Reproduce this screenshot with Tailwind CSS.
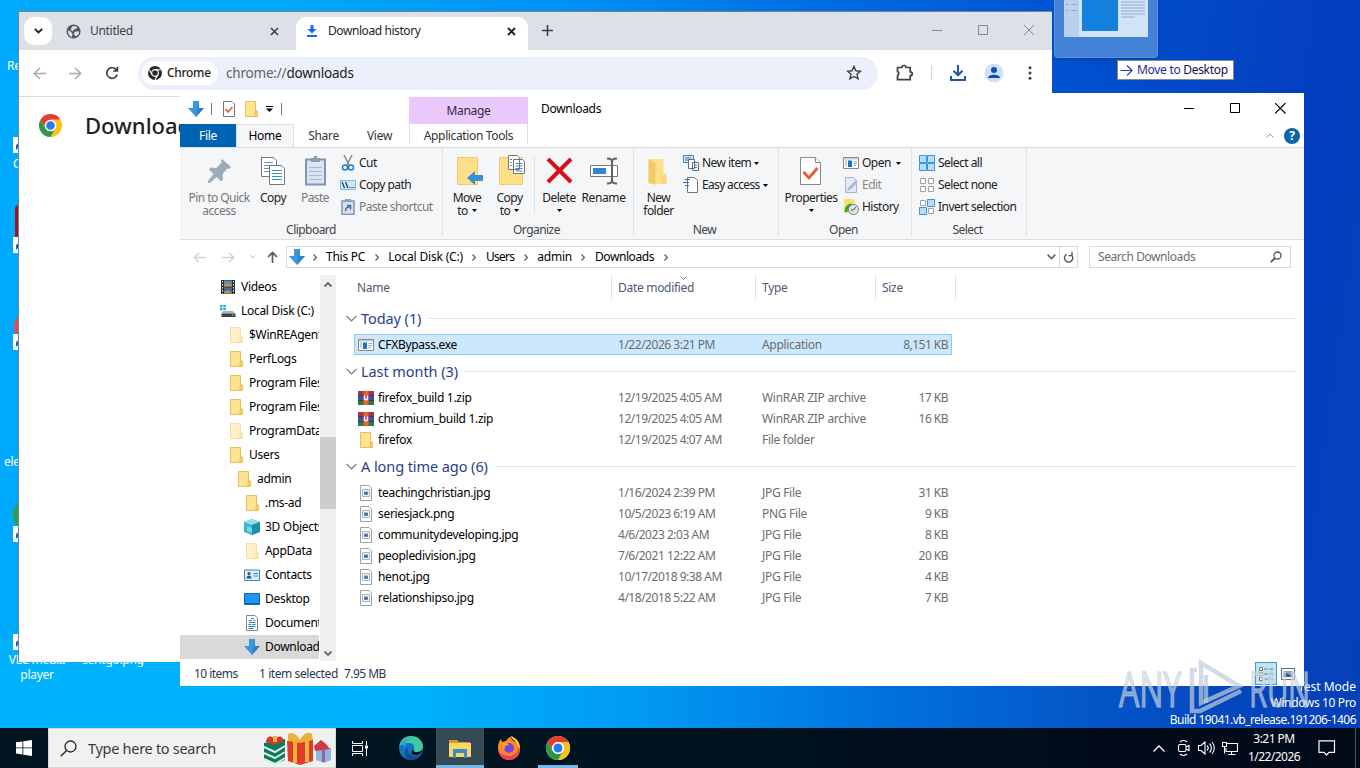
<!DOCTYPE html>
<html lang="en">
  <head>
    <meta charset="UTF-8" />
    <meta name="viewport" content="width=device-width, initial-scale=1.0" />
    <title>Desktop</title>
    <script src="https://cdn.jsdelivr.net/npm/@tailwindcss/browser@4"></script>
  </head>
  <body class="overflow-hidden">
    <!-- Shared icons -->
    <svg class="hidden">
      <symbol id="folder" viewBox="0 0 16 16">
        <path d="M2.500 .5h10v9.500h1.500v5.500h-11.500z" fill="#ffe48f" stroke="#e8c15a" />
        <path d="M12 15.500v-5l2.300-.5v5.500z" fill="#ffd968" stroke="#e0b548" stroke-width=".8" />
      </symbol>
      <symbol id="down" viewBox="0 0 16 16">
        <path d="M5 0h6v7h5l-8 9-8-9h5z" fill="#3a96dd" />
        <path d="M11 0v7h5l-8 9z" fill="#2f80c8" />
      </symbol>
      <symbol id="app" viewBox="0 0 16 16">
        <path d="M.5 2.500h15v11H.5z" fill="#fff" stroke="#8a8a8a" />
        <path d="M1 3h14v1.500H1z" fill="#c9cdd1" />
        <path d="M5 5.500h4v6.500H5z" fill="#1373cf" />
        <path d="M2 6h2M2 8h2M2 10h2M10.500 6.500H14M10.500 8.500H14M10.500 10.500H13" stroke="#8fa6bd" />
      </symbol>
      <symbol id="zip" viewBox="0 0 16 16">
        <path d="M0 1h16v4.500H0z" fill="#a3344f" />
        <path d="M0 5.500h16v5H0z" fill="#3158a8" />
        <path d="M0 10.500h16V15H0z" fill="#2c7a3f" />
        <path d="M0 5.500h16M0 10.500h16" stroke="#3b2330" stroke-width=".8" />
        <path d="M5.500 1h5v14h-5z" fill="#e8642a" />
        <path d="M5 5.500h6v4.500H5z" fill="#c9447a" />
        <path d="M6.500 5.500v4M9.500 5.500v4M6.500 9.500h3" stroke="#fff" stroke-width="1.300" fill="none" />
      </symbol>
      <symbol id="img" viewBox="0 0 16 16">
        <path d="M2.500 .5h8.500l2.500 2.500v12.500h-11z" fill="#fff" stroke="#9aa2ac" />
        <path d="M4.500 4.500h7v7h-7z" fill="#f2f6fa" stroke="#a8b4c0" />
        <path d="M6 6.500h4v3H6z" fill="#5c86b0" />
        <path d="M6 9.500l2-2 2 2z" fill="#33577c" />
      </symbol>
      <symbol id="video" viewBox="0 0 16 16">
        <path d="M1 1h14v14H1z" fill="#2e2e2e" />
        <path d="M4 1.500h8v6H4z" fill="#6287b8" />
        <path d="M4 8.500h8v6H4z" fill="#4467a3" />
        <path d="M4 6l4-2 4 3v.5H4zM4 13l4-2 4 3v.5H4z" fill="#b99b45" />
        <path d="M2.500 2v12.500M13.500 2v12.500" stroke="#e8e8e8" stroke-dasharray="1.500 1.500" />
      </symbol>
      <symbol id="disk" viewBox="0 0 16 16">
        <path d="M0 2h2.500v2.300H0zM3.300 2h2.500v2.300H3.300zM0 5h2.500v2.300H0zM3.300 5h2.500v2.300H3.300z" fill="#18b5d8" />
        <path d="M3 8h10l2 2.500H1.500z" fill="#aab1b8" />
        <path d="M1.500 10.500H15.500v3.500h-14z" fill="#3c4146" />
        <path d="M12 12h2" stroke="#4bd66b" />
      </symbol>
      <symbol id="cube" viewBox="0 0 16 16">
        <path d="M8 0l8 3v10l-8 3-8-3V3z" fill="#3bb6c9" />
        <path d="M0 3l8-3 8 3-8 3z" fill="#8fe3ea" />
        <path d="M8 6l8-3v10l-8 3z" fill="#1a90ae" />
        <path d="M3 7l5 2v5l-5-2z" fill="#74d6e0" />
      </symbol>
      <symbol id="contact" viewBox="0 0 16 16">
        <path d="M.5 3h15v10.500H.5z" fill="#d9eefa" stroke="#4a87ad" />
        <circle cx="5" cy="6.500" r="1.500" fill="#2b5878" />
        <path d="M2.500 11.500c0-4 5-4 5 0z" fill="#2b5878" />
        <path d="M9.500 6.500H14M9.500 9H14" stroke="#4a87ad" />
      </symbol>
      <symbol id="desk" viewBox="0 0 16 16">
        <path d="M.5 2.500h15v11H.5z" fill="#1898f8" stroke="#1668b0" />
        <path d="M1 12.500h14" stroke="#0e5fae" />
      </symbol>
      <symbol id="doc" viewBox="0 0 16 16">
        <path d="M2.500 .5h8.500l2.500 2.500v12.500h-11z" fill="#fff" stroke="#7d8892" />
        <path d="M7 3.500h3M4.500 5.500H8M9.500 5.500h2M4.500 7.500h7M4.500 9.500H7M8 9.500h3.500M4.500 11.500h7M4.500 13.500h5" stroke="#2f82c4" />
      </symbol>
      <symbol id="chrome" viewBox="0 0 48 48">
        <circle cx="24" cy="24" r="24" fill="#fff" />
        <path d="M3.200 12A24 24 0 0 1 44.800 12H24a12 12 0 0 0-10.400 18z" fill="#e33b2e" />
        <path d="M44.800 12A24 24 0 0 1 24 48l10.400-18A12 12 0 0 0 24 12z" fill="#fbc116" />
        <path d="M24 48A24 24 0 0 1 3.200 12l10.400 18a12 12 0 0 0 20.800 0z" fill="#2b9847" />
        <circle cx="24" cy="24" r="11.500" fill="#fff" />
        <circle cx="24" cy="24" r="9" fill="#2e79ea" />
      </symbol>
      <symbol id="shortcut" viewBox="0 0 16 16">
        <path d="M0 0h16v16H0z" fill="#fff" />
        <path d="M3 13V8l4-3V2l6 5-6 5V9z" fill="#1f5fae" />
      </symbol>
    </svg>

    <div class="relative h-[768px] w-[1360px] overflow-hidden bg-[linear-gradient(98deg,#00aaff_0%,#00a8fc_20%,#008ff2_40%,#006fe2_55%,#0052d0_73%,#043fc0_90%,#0540bc_100%)] font-['Noto_Sans','Open_Sans',sans-serif] text-[12px] leading-4 tracking-[-0.025em] text-black">
      <div class="absolute inset-x-0 top-[640px] h-[88px] bg-[linear-gradient(90deg,#00b2fc_0%,#00b2fc_30%,#009cf4_46%,#0074e0_64%,#045acb_78%,#0444bc_92%,#0440ba_100%)]"></div>

      <!-- Desktop icons that stick out from behind the windows -->
      <div class="absolute top-[58px] left-[7px] text-white">Recycle</div>
      <svg class="absolute top-[137px] left-[13px] size-4"><use href="#shortcut" /></svg>
      <div class="absolute top-[156px] left-[13px] text-white">Ccleaner</div>
      <div class="absolute top-[205px] left-[15px] h-9 w-8 rounded bg-[#a01420]"></div>
      <svg class="absolute top-[237px] left-[13px] size-4"><use href="#shortcut" /></svg>
      <div class="absolute top-[311px] left-[14px] size-8 rounded-full bg-[#e5484e]"></div>
      <svg class="absolute top-[334px] left-[13px] size-4"><use href="#shortcut" /></svg>
      <div class="absolute top-[454px] left-[4px] text-white">electronic</div>
      <div class="absolute top-[498px] left-[13px] size-[34px] rounded-full bg-[#2f9e4c]"></div>
      <svg class="absolute top-[526px] left-[13px] size-4"><use href="#shortcut" /></svg>
      <svg class="absolute top-[634px] left-[13px] size-4"><use href="#shortcut" /></svg>
      <div class="absolute top-[652px] left-[8px] w-[58px] text-center leading-[15px] text-white">VLC media player</div>
      <div class="absolute top-[652px] left-[82px] leading-[15px] text-white">seritgo.png</div>

      <!-- Dragged file -->
      <div class="absolute top-0 left-[1054px] flex h-[58px] w-[104px] justify-center rounded-b-sm border border-t-0 border-[#5b92dc] bg-[#4482d8] shadow-md">
        <svg class="h-[37px] w-[84px]" viewBox="0 0 84 37">
          <path d="M0 0h84v37H0z" fill="#d3e3f7" />
          <path d="M0 0h15v37H0z" fill="#b9d1ef" />
          <path d="M18 0h36v31H18z" fill="#1480de" />
          <path d="M2 4.500h3M7 4.500h6M2 10.500h3M7 10.500h6M57 2h24M57 5h24M57 8h24M57 11h24M57 14h24M57 17h14" stroke="#8faed2" />
        </svg>
      </div>
      <div class="absolute top-[60px] left-[1117px] flex h-5 w-[117px] items-center gap-1 border border-[#8a8a8a] bg-white pl-[2px] text-[#1a2a9c]">
        <svg class="size-[13px]" viewBox="0 0 13 13" fill="none" stroke="#2a3fc0" stroke-width="1.2"><path d="M.5 6.500h11M7 1.500l5 5-5 5" /></svg>
        <span class="whitespace-nowrap">Move to <span class="text-[#110a50]">Desktop</span></span>
      </div>

      <!-- Chrome window -->
      <div class="absolute top-[11px] left-[18px] flex h-[651px] w-[1034px] flex-col border-t border-l border-[#6e8494] bg-white text-[#3c4043]">
        <div class="flex h-[38px] shrink-0 bg-[#dde1e7] pt-[5px] pl-[5px]">
          <div class="flex size-7 items-center justify-center rounded-[10px] bg-white">
            <svg class="h-[6px] w-[9px]" viewBox="0 0 9 6" fill="none" stroke="#1f1f1f" stroke-width="1.800"><path d="M.8.8l3.700 3.700L8.200.8" /></svg>
          </div>
          <div class="flex h-7 w-[244px] items-center pl-[14px]">
            <svg class="size-[15px]" viewBox="0 0 16 16"><circle cx="8" cy="8" r="7.500" fill="#54585c" /><path d="M2 7l3 1 2 3-1 3C3 13 2 10 2 7zM7 2l5 1-1 2-3 1-1 2-2-2zM10 8l4 0c0 3-2 5-4 5l-2-3z" fill="#dde1e7" /></svg>
            <span class="ml-[9px] flex-1">Untitled</span>
            <svg class="mr-[17px] size-[9px]" viewBox="0 0 9 9" stroke="#3c4043" stroke-width="1.600"><path d="M1 1l7 7M8 1L1 8" /></svg>
          </div>
          <div class="flex h-[33px] w-[232px] items-center rounded-t-[10px] bg-white pb-[5px] pl-[11px] text-[#1f1f1f]">
            <svg class="h-3 w-[10px]" viewBox="0 0 10 12"><path d="M3.500 0h3v4H9.500L5 8.500.5 4H3.500zM0 10h10v2H0z" fill="#1a66e8" /></svg>
            <span class="ml-[11px] flex-1 tracking-[-0.035em]">Download history</span>
            <svg class="mr-[12px] size-[9px]" viewBox="0 0 9 9" stroke="#1f1f1f" stroke-width="1.800"><path d="M1 1l7 7M8 1L1 8" /></svg>
          </div>
          <svg class="mt-2 ml-[14px] size-[11px]" viewBox="0 0 11 11" stroke="#3c4043" stroke-width="1.600"><path d="M5.500 0v11M0 5.500h11" /></svg>
          <div class="mt-2 mr-[18px] ml-auto flex items-start gap-[36px]">
            <svg class="size-[10px]" viewBox="0 0 10 10" stroke="#85888c"><path d="M0 5.500h10" /></svg>
            <svg class="size-[10px]" viewBox="0 0 10 10" stroke="#85888c" fill="none"><path d="M.5.5h9v9h-9z" /></svg>
            <svg class="size-[10px]" viewBox="0 0 10 10" stroke="#85888c"><path d="M0 0l10 10M10 0L0 10" /></svg>
          </div>
        </div>
        <div class="flex h-[47px] shrink-0 items-center rounded-t-lg border-b border-[#d8dbe0] bg-white pl-[14px]">
          <svg class="size-[13px]" viewBox="0 0 13 13" fill="none" stroke="#a6a8aa" stroke-width="1.500"><path d="M13 6.500H1.500M7 1L1.300 6.500 7 12" /></svg>
          <svg class="ml-[23px] size-[13px]" viewBox="0 0 13 13" fill="none" stroke="#a6a8aa" stroke-width="1.500"><path d="M0 6.500h11.500M6 1l5.700 5.500L6 12" /></svg>
          <svg class="ml-[23px] size-[14px]" viewBox="0 0 14 14" fill="none" stroke="#3c4043" stroke-width="1.700"><path d="M11.600 4.200A5.300 5.300 0 1 0 12.200 8.500M12.400 .8v4.200H8.200" /></svg>
          <div class="ml-[19px] flex h-[33px] w-[740px] items-center rounded-full bg-[#ecf0fa] pl-1">
            <div class="flex h-6 w-[76px] items-center rounded-full bg-white pl-[6px]">
              <svg class="size-[14px]" viewBox="0 0 16 16"><circle cx="8" cy="8" r="8" fill="#28292b" /><circle cx="8" cy="8" r="3.800" fill="none" stroke="#fff" stroke-width="1.300" /><path d="M8 4.200h7M4.700 10L1.300 4M11.300 10L8 15.800" stroke="#fff" stroke-width="1.200" /></svg>
              <span class="ml-[5px] font-medium text-[#1f1f1f]">Chrome</span>
            </div>
            <span class="ml-[8px] text-[13.5px] tracking-[-0.015em] text-[#5f6368]">chrome://<span class="text-[#202124]">downloads</span></span>
            <svg class="mr-[16px] ml-auto size-4" viewBox="0 0 16 16" fill="none" stroke="#3c4043" stroke-width="1.400"><path d="M8 1.500l1.900 4.300 4.600.4-3.500 3.100 1.100 4.600L8 11.500l-4.100 2.400L5 9.300 1.500 6.200l4.600-.4z" /></svg>
          </div>
          <svg class="ml-[18px] size-[18px]" viewBox="0 0 18 18" fill="none" stroke="#3c4043" stroke-width="1.700"><path d="M1.500 3.500h4.500a2 2 0 0 1 4 0h4.200v4.300a2 2 0 0 1 0 4v3.900H1.500v-4.200a2.200 2.200 0 0 0 0-4z" /></svg>
          <div class="ml-[17px] h-[14px] w-px bg-[#c5d6f5]"></div>
          <svg class="ml-[18px] size-4" viewBox="0 0 16 16" fill="none" stroke="#2056a8" stroke-width="2"><path d="M8 0v10M3.500 5.800L8 10.300l4.500-4.500M1 11v4h14v-4" /></svg>
          <svg class="ml-[18px] size-[20px]" viewBox="0 0 20 20"><circle cx="10" cy="10" r="9.500" fill="#d0e2fb" /><circle cx="10" cy="7" r="3" fill="#124fb8" /><path d="M4 15c0-4.500 12-4.500 12 0z" fill="#124fb8" /></svg>
          <svg class="ml-[24px] h-[14px] w-1" viewBox="0 0 4 14" fill="#3c4043"><circle cx="2" cy="1.800" r="1.500" /><circle cx="2" cy="7" r="1.500" /><circle cx="2" cy="12.200" r="1.500" /></svg>
        </div>
        <div class="flex items-center pt-[12px] pl-[20px]">
          <svg class="size-[23px]"><use href="#chrome" /></svg>
          <span class="ml-[23px] text-[22px] leading-8 font-medium tracking-normal text-[#202124]">Downloads</span>
        </div>
      </div>

      <!-- Explorer window -->
      <div class="absolute top-[93px] left-[180px] flex h-[593px] w-[1124px] flex-col bg-white">
        <!-- Title bar and tabs -->
        <div class="flex h-[54px] shrink-0">
          <div class="w-[229px]">
            <div class="flex h-[31px] items-center pl-2">
              <svg class="size-4"><use href="#down" /></svg>
              <div class="ml-[7px] h-3 w-px bg-[#777]"></div>
              <svg class="ml-[9px] size-4" viewBox="0 0 16 16" fill="#fff" stroke="#777"><path d="M2.500 .5h8.500l2.500 2.500v12.500h-11z" /><path d="M4.500 8l2.500 3 4.500-5" fill="none" stroke="#e0623a" stroke-width="1.700" /></svg>
              <svg class="ml-[6px] size-4"><use href="#folder" /></svg>
              <svg class="ml-[7px] h-[6px] w-[7px]" viewBox="0 0 7 6"><path d="M0 0h7v1H0zM0 2.500h7L3.500 6z" /></svg>
              <div class="ml-[8px] h-3 w-px bg-[#777]"></div>
            </div>
            <div class="flex h-[23px] leading-[23px]">
              <div class="w-14 bg-[#0063b1] text-center text-white">File</div>
              <div class="-mb-px w-[58px] border border-b-0 border-[#e0e2e4] bg-[#f5f6f7] text-center leading-[21px]">Home</div>
              <div class="w-[59px] text-center text-[#333]">Share</div>
              <div class="w-[53px] text-center text-[#333]">View</div>
            </div>
          </div>
          <div class="w-[119px] pt-1">
            <div class="h-[27px] bg-[#e9c9fb] text-center leading-[28px] text-[#3a2545]">Manage</div>
            <div class="h-[20px] border-x border-[#e4dcea] text-center leading-[23px] tracking-[-0.03em] whitespace-nowrap text-[#333]">Application Tools</div>
          </div>
          <span class="mt-2 ml-[13px]">Downloads</span>
          <div class="ml-auto w-[120px]">
            <div class="flex h-[31px] items-center gap-[34.5px]">
              <svg class="size-[11px]" viewBox="0 0 11 11" stroke="#000"><path d="M0 5.500h10" /></svg>
              <svg class="size-[11px]" viewBox="0 0 11 11" stroke="#000" fill="none"><path d="M.5.5h9v9h-9z" /></svg>
              <svg class="size-[11px]" viewBox="0 0 11 11" stroke="#000" stroke-width="1.100"><path d="M0 0l10.500 10.500M10.500 0L0 10.500" /></svg>
            </div>
            <div class="flex h-[23px] items-center pl-[82px]">
              <svg class="h-[5px] w-2" viewBox="0 0 8 5" fill="none" stroke="#999"><path d="M.5 4.500L4 1l3.500 3.500" /></svg>
              <div class="ml-[10px] size-4 rounded-full bg-[#0b63ae] text-center text-[12px] leading-4 font-bold text-white">?</div>
            </div>
          </div>
        </div>

        <!-- Ribbon -->
        <div class="flex h-[93px] shrink-0 border-y border-[#dcdfe1] bg-[#f5f6f7] tracking-[-0.045em] text-[#222]">
          <div class="relative flex h-[88px] w-[263px] border-r border-[#e0e2e4] pt-1 pl-[6px]">
            <div class="flex w-[66px] flex-col items-center pt-[3px] text-center leading-[13px] text-[#777]">
              <svg class="mb-1 h-8 w-8" viewBox="0 0 32 32" fill="#9dabbb"><path d="M19 4l9 8-2 2-1.500-.5-5 5.500.5 5.500-2 2-4.500-4.500L7 28l-2 0 0-2 5.500-7L6 14.500 8 12.500l5.500.5 5-5.500-.500-1.500z" /></svg>
              Pin to Quick access
            </div>
            <div class="flex w-[42px] flex-col items-center pt-[3px] leading-[13px]">
              <svg class="mb-1 size-8" viewBox="0 0 32 32" fill="#fff" stroke="#777"><path d="M4.500 2.500h12l3 3v16h-15z" /><path d="M7 7.500h9M7 10.500h9M7 13.500h9M7 16.500h9" stroke="#5b9ad8" /><path d="M12.500 10.500h12l3 3v16h-15z" /><path d="M15 15.500h10M15 18.500h10M15 21.500h10M15 24.500h10" stroke="#3f88d8" /></svg>
              Copy
            </div>
            <div class="flex w-[42px] flex-col items-center pt-[3px] leading-[13px] text-[#777]">
              <svg class="mb-1 size-8" viewBox="0 0 32 32"><path d="M7 4.500h19v25H7z" fill="#dbe4f2" stroke="#8393b2" stroke-width="2" /><path d="M12 3h9v4h-9zM15 1h3v3h-3z" fill="#8e9aac" /><path d="M10 12.500h13M10 16.500h13M10 20.500h13M10 24.500h13" stroke="#aab8d2" /></svg>
              Paste
            </div>
            <div class="ml-1">
              <div class="flex h-[22px] items-center"><svg class="mr-[3px] size-4" viewBox="0 0 16 16" fill="none"><path d="M4 0l5 10M12 0L7 10" stroke="#888" stroke-width="1.500" /><circle cx="5" cy="12.500" r="2.500" stroke="#1f83d0" stroke-width="1.500" /><circle cx="11" cy="12.500" r="2.500" stroke="#1f83d0" stroke-width="1.500" /></svg>Cut</div>
              <div class="flex h-[22px] items-center"><svg class="mr-[3px] size-4" viewBox="0 0 16 16" fill="none"><path d="M.5 3.500h15v9H.5z" fill="#cfe6f8" stroke="#86b8e0" /><path d="M2 5l2.500 6M5.500 5L8 11M9.500 10.500h1M11.500 10.500h1M13.500 10.500h1" stroke="#10395c" stroke-width="1.200" /></svg>Copy path</div>
              <div class="flex h-[22px] items-center text-[#777]"><svg class="mr-[3px] size-4" viewBox="0 0 16 16" fill="none"><path d="M2 2h12v13.500H2z" fill="#d5dfef" stroke="#8494b4" stroke-width="1.500" /><path d="M5 0h6v3H5z" fill="#94a1b5" /><path d="M5.500 12c0-3 1-4 4-4M7 6.500h3.500v4" stroke="#51699c" stroke-width="1.500" /></svg>Paste shortcut</div>
            </div>
            <span class="absolute inset-x-0 bottom-[-2px] text-center text-[#444]">Clipboard</span>
          </div>
          <div class="relative flex h-[88px] w-[191px] border-r border-[#e0e2e4] pt-1 pl-[3px]">
            <div class="flex w-[42px] flex-col items-center pt-[3px] text-center leading-[13px]">
              <svg class="mb-1 size-8" viewBox="0 0 32 32"><path d="M6.500 2.500h20v27h-20z" fill="#ffe08a" stroke="#eccb72" /><path d="M16 23l8-7v4h8v6h-8v4z" fill="#3a8fd6" /></svg>
              Move<span class="flex items-center gap-1">to <svg class="h-[3px] w-[5px]" viewBox="0 0 5 3"><path d="M0 0h5L2.500 3z" /></svg></span>
            </div>
            <div class="flex w-[43px] flex-col items-center pt-[3px] text-center leading-[13px]">
              <svg class="mb-1 size-8" viewBox="0 0 32 32"><path d="M5.500 2.500h23v27h-23z" fill="#ffe08a" stroke="#eccb72" /><path d="M14.500.5h9l2 2v12h-11zM19.500 4.500h9l2 2v12h-11z" fill="#fff" stroke="#777" /><path d="M21.500 8.500h7M21.500 11h7M21.500 13.500h7M21.500 16h7M16 4.500h2M16 7.500h2M16 10.500h2" stroke="#3f88d8" /></svg>
              Copy<span class="flex items-center gap-1">to <svg class="h-[3px] w-[5px]" viewBox="0 0 5 3"><path d="M0 0h5L2.500 3z" /></svg></span>
            </div>
            <div class="mx-[3px] mt-1 h-[58px] w-px bg-[#e0e2e4]"></div>
            <div class="flex w-[42px] flex-col items-center pt-[3px] text-center leading-[13px]">
              <svg class="mb-1 size-8" viewBox="0 0 32 32" stroke="#d9101c" stroke-width="4"><path d="M5 4l23 23M28 4L5 27" /></svg>
              Delete<svg class="mt-[5px] h-[3px] w-[5px]" viewBox="0 0 5 3"><path d="M0 0h5L2.500 3z" /></svg>
            </div>
            <div class="flex w-[47px] flex-col items-center pt-[3px] text-center leading-[13px] tracking-[-0.03em]">
              <svg class="mb-1 size-8" viewBox="0 0 32 32" fill="none"><path d="M2.500 10.500h27v11h-27z" fill="#fff" stroke="#777" /><path d="M5 13h13v6H5z" fill="#2f83d8" /><path d="M19 3.500c3 0 5 1 5 3v19c0 2-2 3-5 3M29 3.500c-3 0-5 1-5 3M24 25.500c0 2 2 3 5 3" stroke="#5f6468" stroke-width="2" /></svg>
              Rename
            </div>
            <span class="absolute inset-x-0 bottom-[-2px] -ml-[3px] text-center text-[#444]">Organize</span>
          </div>
          <div class="relative flex h-[88px] w-[145px] border-r border-[#e0e2e4] pt-1 pl-1">
            <div class="flex w-[41px] flex-col items-center pt-[3px] text-center leading-[13px]">
              <svg class="mb-1 size-8" viewBox="0 0 32 32"><path d="M5.500 4h15v16l3 0v9h-18z" fill="#ffe08a" /><path d="M5.500 4l7 4v22l-7-3z" fill="#f2cc68" /><path d="M19 20l4.500-1.500V29h-4.500z" fill="#f9d77a" /></svg>
              New folder
            </div>
            <div class="ml-1 whitespace-nowrap">
              <div class="flex h-[22px] items-center"><svg class="mr-[3px] size-4" viewBox="0 0 16 16" fill="#fff" stroke="#5f6f80"><path d="M.5.5h10v7H.5z" fill="#cfe6f8" stroke="#3d87c4" /><path d="M2 3h6M2 5h6" stroke="#3d87c4" /><path d="M5.500 4.500h6v9h-6zM9.500 7.500h6v8h-6z" /><path d="M11 10h3M11 12.500h3" /></svg>New item<svg class="ml-[3px] h-[3px] w-[5px]" viewBox="0 0 5 3"><path d="M0 0h5L2.500 3z" /></svg></div>
              <div class="flex h-[22px] items-center"><svg class="mr-[3px] size-4" viewBox="0 0 16 16" fill="none"><path d="M4.500 .5h7l3 3v12h-10z" fill="#fff" stroke="#777" /><path d="M2 2.500h5M0 5.500h6M2 8.500h4" stroke="#1f6fb8" stroke-width="1.200" /></svg><span class="tracking-[-0.055em]">Easy access</span><svg class="ml-[3px] h-[3px] w-[5px]" viewBox="0 0 5 3"><path d="M0 0h5L2.500 3z" /></svg></div>
            </div>
            <span class="absolute inset-x-0 bottom-[-2px] -ml-[3px] text-center text-[#444]">New</span>
          </div>
          <div class="relative flex h-[88px] w-[133px] border-r border-[#e0e2e4] pt-1 pl-[5px]">
            <div class="flex w-[54px] flex-col items-center pt-[3px] text-center leading-[13px]">
              <svg class="mb-1 size-8" viewBox="0 0 32 32" fill="#fff" stroke="#888"><path d="M5.500 2.500h15l5 5v22h-20z" /><path d="M20.500 2.500v5h5" /><path d="M8.500 17l5.500 6 8.500-10" fill="none" stroke="#e8592b" stroke-width="2.800" /></svg>
              Properties<svg class="mt-[5px] h-[3px] w-[5px]" viewBox="0 0 5 3"><path d="M0 0h5L2.500 3z" /></svg>
            </div>
            <div class="ml-[5px]">
              <div class="flex h-[22px] items-center"><svg class="mr-[3px] size-4"><use href="#app" /></svg>Open<svg class="ml-[5px] h-[3px] w-[5px]" viewBox="0 0 5 3"><path d="M0 0h5L2.500 3z" /></svg></div>
              <div class="flex h-[22px] items-center text-[#888]"><svg class="mr-[3px] size-4" viewBox="0 0 16 16"><path d="M2.500 .5h8l3 3v12h-11z" fill="#e3ebf6" stroke="#a5b4cc" /><path d="M4 14l1-3 8-8 2 2-8 8z" fill="#a9bbd6" /></svg>Edit</div>
              <div class="flex h-[22px] items-center"><svg class="mr-[3px] size-4" viewBox="0 0 16 16"><path d="M1 0h9l2 3v11H1z" fill="#ffdc6e" /><path d="M3 13c0-5 3-7 6-7" stroke="#2fa33c" stroke-width="3" fill="none" /><circle cx="10.500" cy="10.500" r="5" fill="#dfe9e4" stroke="#6f7f78" /><path d="M10.500 11l2.500-3M10.500 11H8" stroke="#444" fill="none" /></svg>History</div>
            </div>
            <span class="absolute inset-x-0 bottom-[-2px] -ml-[3px] text-center text-[#444]">Open</span>
          </div>
          <div class="relative h-[88px] w-[115px] border-r border-[#e0e2e4] pt-1 pl-[7px] whitespace-nowrap">
            <div class="flex h-[22px] items-center"><svg class="mr-[3px] size-4" viewBox="0 0 16 16" fill="#b9defa" stroke="#3d94d8"><path d="M.5.5h7v7h-7zM8.500.5h7v7h-7zM.5 8.500h7v7h-7zM8.500 8.500h7v7h-7z" /></svg>Select all</div>
            <div class="flex h-[22px] items-center"><svg class="mr-[3px] size-4" viewBox="0 0 16 16" fill="#fff" stroke="#a0a0a0"><path d="M1.500 1.500h5v5h-5zM9.500 1.500h5v5h-5zM1.500 9.500h5v5h-5zM9.500 9.500h5v5h-5z" /></svg>Select none</div>
            <div class="flex h-[22px] items-center"><svg class="mr-[3px] size-4" viewBox="0 0 16 16" fill="#fff" stroke="#a0a0a0"><path d="M1.500 1.500h5v5h-5zM9.500 9.500h5v5h-5z" /><path d="M8.500.5h7v7h-7zM.5 8.500h7v7h-7z" fill="#b9defa" stroke="#3d94d8" /></svg>Invert selection</div>
            <span class="absolute inset-x-0 bottom-[-2px] -ml-[3px] text-center text-[#444]">Select</span>
          </div>
        </div>

        <!-- Address bar -->
        <div class="flex h-[35px] shrink-0 items-start pt-[6px]">
          <div class="flex h-[22px] w-[106px] items-center pl-[13px]">
            <svg class="h-[11px] w-[13px]" viewBox="0 0 13 11" fill="none" stroke="#d0d2d4" stroke-width="1.500"><path d="M13 5.500H1.500M6 .8L1.300 5.500 6 10.200" /></svg>
            <svg class="ml-[16px] h-[11px] w-[13px]" viewBox="0 0 13 11" fill="none" stroke="#d0d2d4" stroke-width="1.500"><path d="M0 5.500h11.500M7 .8l4.700 4.700L7 10.200" /></svg>
            <svg class="ml-[15px] h-1 w-[6px]" viewBox="0 0 6 4" fill="none" stroke="#c0c0c0"><path d="M.5.5L3 3 5.500.5" /></svg>
            <svg class="ml-[11px] h-3 w-[11px]" viewBox="0 0 11 12" fill="none" stroke="#5a5a5a" stroke-width="1.700"><path d="M5.500 12V1.500M1 6l4.500-4.500L10 6" /></svg>
          </div>
          <div id="crumbs" class="flex h-[22px] w-[774px] items-center border border-[#d9d9d9] pl-[2px]">
            <svg class="size-4"><use href="#down" /></svg>
          </div>
          <div class="flex h-[22px] w-[18px] items-center justify-center border border-l-0 border-[#d9d9d9]">
            <svg class="size-[11px]" viewBox="0 0 12 12" fill="none" stroke="#555" stroke-width="1.500"><path d="M9.500 3.500A4.500 4.500 0 1 1 4 2.500M9.800 0v4H6" /></svg>
          </div>
          <div class="ml-[11px] flex h-[22px] w-[202px] items-center justify-between border border-[#d9d9d9] pr-2 pl-2 tracking-[-0.035em] text-[#6d6d6d]">
            Search Downloads
            <svg class="size-3" viewBox="0 0 12 12" fill="none" stroke="#555" stroke-width="1.300"><circle cx="7.500" cy="4.500" r="3.500" /><path d="M5 7L.8 11.200" stroke-width="1.800" /></svg>
          </div>
        </div>

        <!-- Tree and file list -->
        <div class="flex h-[386px] shrink-0">
          <div id="tree" class="w-[139px] overflow-hidden"></div>
          <div class="ml-px flex w-4 flex-col items-center bg-[#f0f0f0]">
            <svg class="mt-[7px] h-[5px] w-2 shrink-0" viewBox="0 0 8 5" fill="none" stroke="#555" stroke-width="1.600"><path d="M.5 4.500L4 1l3.500 3.500" /></svg>
            <div class="mt-[150px] h-[72px] w-full shrink-0 bg-[#cdcdcd]"></div>
            <svg class="mt-auto mb-[5px] h-[5px] w-2" viewBox="0 0 8 5" fill="none" stroke="#555" stroke-width="1.600"><path d="M.5.5L4 4 7.500.5" /></svg>
          </div>
          <div class="flex-1">
            <div class="relative flex h-[27px] pl-[14px] leading-[25px] text-[#4c5b76]">
              <div class="h-[25px] w-[262px] border-r border-[#e3e3e3] pl-[7px]">Name</div>
              <div class="h-[25px] w-[144px] border-r border-[#e3e3e3] pl-[6px]">Date modified</div>
              <div class="h-[25px] w-[120px] border-r border-[#e3e3e3] pl-[6px]">Type</div>
              <div class="h-[25px] w-[80px] border-r border-[#e3e3e3] pl-[6px]">Size</div>
              <svg class="absolute top-[1px] left-[344px] h-1 w-[7px]" viewBox="0 0 7 4" fill="none" stroke="#888"><path d="M.5.5l3 3 3-3" /></svg>
            </div>
            <div id="files"></div>
          </div>
        </div>

        <!-- Status bar -->
        <div class="flex h-[25px] items-center pl-[14px] tracking-[-0.045em] whitespace-nowrap text-[#1e395b]">
          <span class="w-[65px]">10 items</span>
          <span class="w-[85px] tracking-[-0.035em]">1 item selected</span>
          <span>7.95 MB</span>
          <div class="mr-[9px] ml-auto flex h-full items-center">
            <div class="flex h-[23px] w-[22px] items-center justify-center border border-[#3d9bc4] bg-[#bfe5f5]">
              <svg class="size-4" viewBox="0 0 16 16" fill="#fff" stroke="#777"><path d="M1.500 1.500h3v3h-3zM1.500 6.500h3v3h-3zM1.500 11.500h3v3h-3zM6 3h4M11 3h4M6 8h4M11 8h4M6 13h4M11 13h4" /></svg>
            </div>
            <svg class="ml-[4px] h-3 w-[14px]" viewBox="0 0 14 12"><path d="M.5.5h13v11H.5z" fill="#fff" stroke="#5c6b78" /><path d="M2.500 3h9v6h-9z" fill="#7ea6cc" /><path d="M2.500 9V6l3-1 3 2 3-1v3z" fill="#345774" /></svg>
          </div>
        </div>
      </div>

      <!-- Build info -->
      <div class="absolute top-[678px] right-[4px] flex flex-col items-end text-right leading-[17px] whitespace-nowrap text-white">
        <span class="tracking-normal">Test Mode</span>
        <span class="-mt-px tracking-[-0.03em]">Windows 10 Pro</span>
        <span class="tracking-[-0.045em]">Build 19041.vb_release.191206-1406</span>
      </div>

      <!-- Watermark -->
      <svg class="absolute top-[655px] left-[1115px] h-[65px] w-[200px]" viewBox="0 0 200 65">
        <g fill="#d4dde6" fill-opacity=".6" stroke="#bcc8d6" stroke-opacity=".6" stroke-width="1.600" font-family="Open Sans" font-size="50">
          <text x="4" y="52" textLength="62" lengthAdjust="spacingAndGlyphs">ANY</text>
          <text x="134" y="52" textLength="61" lengthAdjust="spacingAndGlyphs">RUN</text>
        </g>
        <g fill="none" stroke="#c0cddc" stroke-opacity=".7" stroke-width="4.500">
          <path d="M86 8v40L124 31z" />
          <path d="M82 15h-5v41h8l41-20" />
          <path d="M91 20v28" />
        </g>
      </svg>

      <!-- Taskbar -->
      <div class="absolute bottom-0 left-0 flex h-10 w-full bg-[linear-gradient(90deg,#00151f_0%,#00151f_40%,#010c1c_75%,#020a18_100%)] tracking-normal">
        <div class="flex w-12 items-center justify-center">
          <svg class="size-4" viewBox="0 0 16 16" fill="#fff"><path d="M0 2.300l6.500-.9v6.100H0zM7.300 1.300L16 0v7.500H7.300zM0 8.300h6.500v6.200L0 13.600zM7.300 8.300H16V16l-8.700-1.300z" /></svg>
        </div>
        <div class="flex w-72 items-center border border-[#d5d9db] bg-[#f1f1f1] pl-[11px]">
          <svg class="size-[17px]" viewBox="0 0 17 17" fill="none" stroke="#222" stroke-width="1.300"><circle cx="10.500" cy="6.500" r="5.500" /><path d="M6.500 10.500L.8 16.200" /></svg>
          <span class="ml-[11px] text-[14.5px] tracking-[-0.02em] text-[#3a3a3a]">Type here to search</span>
          <svg class="mr-[3px] ml-auto h-[34px] w-[69px]" viewBox="0 0 69 34">
            <path d="M1 12l21-4v21l-10 4-11-5z" fill="#0e7a5c" />
            <path d="M1 16l11 5 10-6M1 22l11 5 10-6M1 28l11 5 10-6" stroke="#d6f0e6" stroke-width="2" fill="none" />
            <path d="M3 11c1-8 7-6 9-2 3-6 9-3 8 1l-8 4z" fill="#d6372d" />
            <path d="M10 5h4v6h-4z" fill="#f0b83a" />
            <path d="M24 10l26-2v22l-13 4-12-4z" fill="#df3b28" />
            <path d="M30 10h4v22h-4zM42 9h4v22h-4z" fill="#f2b53c" />
            <path d="M25 3c5-3 9 1 12 6 3-6 8-9 12-6l1 6-13 3-12-2z" fill="#eeaf3a" />
            <path d="M53 18l15-1v12l-7 3-8-3z" fill="#8db7dc" />
            <path d="M51 15l7-6 5 4 4 5-15 2z" fill="#cf3a44" />
            <path d="M59 18h3v13h-3z" fill="#a35c9d" />
          </svg>
        </div>
        <div class="flex w-12 items-center justify-center">
          <svg class="h-[15px] w-4" viewBox="0 0 16 15" fill="none" stroke="#fff"><path d="M.5 0v2.500h10V0M.5 15v-2.500h10V15M.5 4.500h10v6H.5zM14.500 0v4M14.500 7.500v7.500" /><path d="M13 4.500h3v3h-3z" fill="#fff" stroke="none" /></svg>
        </div>
        <div class="ml-[3px] flex w-12 items-center justify-center">
          <svg class="size-6" viewBox="0 0 24 24"><circle cx="12" cy="12" r="12" fill="#1374bf" /><path d="M.5 10C1 4 6 0 12 0c7 0 12 5 12 10 0 4-3 6-6 6-4 0-4-2-3-3 1-3-1-6-5-6S2 8 .5 10z" fill="#40c8a0" /><path d="M.5 10C2 4 8 2 12 3c-5 1-7 5-5 10-1-4-4-5-6.500-3z" fill="#27a8dc" /><path d="M9 11c-2 6 4 11 12 8-3 4-7 5-10 5C5 23 4 14 9 11z" fill="#0d4f94" /><path d="M15 13c-1 1-1 3 3 3 3 0 5-1 6-3-1 4-4 6-8 6s-5-4-1-6z" fill="#00151f" /></svg>
        </div>
        <div class="ml-px flex w-12 items-center justify-center border-b-[3px] border-[#76b9ed] bg-[#344a54] pt-[3px]">
          <svg class="h-[19px] w-[22px]" viewBox="0 0 22 19"><path d="M0 1h8l2 2h11v3H0z" fill="#d99a26" /><path d="M0 4h22v14H0z" fill="#fbd66b" /><path d="M4 10h14v9h-3v-5H7v5H4z" fill="#3c8bc4" /></svg>
        </div>
        <div class="flex w-[49px] items-center justify-center">
          <svg class="size-6" viewBox="0 0 24 24"><path d="M1 12C1 8 2 5 4 3l1 3 4-1c1-2 3-4 5-4 0 3 2 3 4 5l2-1c2 2 3 5 3 8 0 7-5 11-11 11S1 19 1 12z" fill="#fb8a22" /><path d="M14 0c0 4 6 4 7 10l2 2c0-6-4-10-9-12z" fill="#ffd52e" /><path d="M1 11c1 7 6 9 11 9 5 0 9-3 10-9 2 7-3 13-10 13C5 24 1 19 1 11z" fill="#f23a5d" /><circle cx="12" cy="12" r="5" fill="#7b44d8" /><path d="M4 7c3-2 7 0 8 2-4 0-5 2-4 4-3-1-4-3-4-6z" fill="#ffa62b" /></svg>
        </div>
        <div class="ml-[5px] flex w-10 items-center justify-center border-b-[3px] border-[#76b9ed] pt-[3px]">
          <svg class="size-6"><use href="#chrome" /></svg>
        </div>
        <div class="ml-auto flex items-center text-white">
          <svg class="h-[7px] w-3" viewBox="0 0 12 7" fill="none" stroke="#fff" stroke-width="1.300"><path d="M.5 6.500L6 1l5.500 5.500" /></svg>
          <svg class="ml-[11px] size-4" viewBox="0 0 16 16" fill="none" stroke="#fff" stroke-width="1.100"><rect x="2.500" y="4.500" width="7.500" height="7" rx="1.500" /><path d="M10 7l3-1.500v5L10 9M4 2c2-2 5-2 7 0M4 14c2 2 5 2 7 0" /></svg>
          <svg class="ml-[5px] h-4 w-[18px]" viewBox="0 0 18 16" fill="none" stroke="#fff" stroke-width="1.100"><path d="M1.500 5.500h2.500l4-3.500v12l-4-3.500H1.500zM10 5.500c1.500 1.500 1.500 3.500 0 5M12.500 3.500c2.500 2.500 2.500 6.500 0 9M15 2c3 3.500 3 8.500 0 12" /></svg>
          <svg class="ml-[7px] size-4" viewBox="0 0 16 16" fill="none" stroke="#fff" stroke-width="1.100"><path d="M5 3.500h10.500v8H4V8M9.500 11.500v3M6 14.500h7.500M.5 2.500h4v4h-4zM2.500 6.500v7" /></svg>
          <div class="ml-[8px] w-[56px] text-center leading-[18px] tracking-[-0.045em]">3:21 PM<br />1/22/2026</div>
          <svg class="ml-[16px] h-4 w-[18px]" viewBox="0 0 18 16" fill="none" stroke="#fff" stroke-width="1.200"><path d="M1 .8h15.500v11.500H11L8.500 15 6 12.300H1z" /></svg>
          <div class="mr-[4px] ml-[19px] h-10 w-px bg-[#4a5260]"></div>
        </div>
      </div>
    </div>

    <script>
      // Breadcrumb labels, each followed by a chevron
      const crumbs = [
        ["This PC", "tracking-[-0.02em]"],
        ["Local Disk (C:)", "tracking-[-0.015em]"],
        ["Users", "tracking-[-0.06em]"],
        ["admin", "tracking-[-0.02em]"],
        ["Downloads", "tracking-[-0.035em]"],
      ];
      const chevron =
        '<svg class="mx-[9.5px] h-[7px] w-[4px] shrink-0" viewBox="0 0 4 7" fill="none" stroke="#555" stroke-width="1.2"><path d="M.5.5l3 3-3 3" /></svg>';
      document.getElementById("crumbs").innerHTML +=
        '<span class="-ml-[2px]"></span>' +
        chevron +
        crumbs.map(([label, tracking]) => `<span class="whitespace-nowrap ${tracking}">${label}</span>${chevron}`).join("") +
        '<svg class="mr-[3px] ml-auto h-[6px] w-[9px]" viewBox="0 0 9 6" fill="none" stroke="#666" stroke-width="1.7"><path d="M.7.7l3.800 3.800L8.300.7" /></svg>';

      // Tree: icon, label, indent, dimmed
      const tree = [
        ["video", "Videos", 40],
        ["disk", "Local Disk (C:)", 40],
        ["folder", "$WinREAgent", 48, true],
        ["folder", "PerfLogs", 48],
        ["folder", "Program Files", 48],
        ["folder", "Program Files (x86)", 48],
        ["folder", "ProgramData", 48, true],
        ["folder", "Users", 48],
        ["folder", "admin", 56],
        ["folder", ".ms-ad", 64],
        ["cube", "3D Objects", 64],
        ["folder", "AppData", 64, true],
        ["contact", "Contacts", 64],
        ["desk", "Desktop", 64],
        ["doc", "Documents", 64],
        ["down", "Downloads", 64],
      ];
      document.getElementById("tree").innerHTML = tree
        .map(
          ([icon, label, indent, dim], i) => `
          <div class="flex h-6 items-center whitespace-nowrap ${i === 15 ? "bg-[#d9d9d9]" : ""}" style="padding-left: ${indent}px">
            <svg class="mr-[5px] size-4 shrink-0 ${dim ? "opacity-50" : ""}"><use href="#${icon}" /></svg>${label}
          </div>`
        )
        .join("");

      const groups = [
        ["Today (1)", [["app", "CFXBypass.exe", "1/22/2026 3:21 PM", "Application", "8,151 KB"]]],
        [
          "Last month (3)",
          [
            ["zip", "firefox_build 1.zip", "12/19/2025 4:05 AM", "WinRAR ZIP archive", "17 KB"],
            ["zip", "chromium_build 1.zip", "12/19/2025 4:05 AM", "WinRAR ZIP archive", "16 KB"],
            ["folder", "firefox", "12/19/2025 4:07 AM", "File folder", ""],
          ],
        ],
        [
          "A long time ago (6)",
          [
            ["img", "teachingchristian.jpg", "1/16/2024 2:39 PM", "JPG File", "31 KB"],
            ["img", "seriesjack.png", "10/5/2023 6:19 AM", "PNG File", "9 KB"],
            ["img", "communitydeveloping.jpg", "4/6/2023 2:03 AM", "JPG File", "8 KB"],
            ["img", "peopledivision.jpg", "7/6/2021 12:22 AM", "JPG File", "20 KB"],
            ["img", "henot.jpg", "10/17/2018 9:38 AM", "JPG File", "4 KB"],
            ["img", "relationshipso.jpg", "4/18/2018 5:22 AM", "JPG File", "7 KB"],
          ],
        ],
      ];
      document.getElementById("files").innerHTML = groups
        .map(
          ([title, rows]) => `
          <div class="flex h-8 items-center pr-2 pl-[10px] text-[14.5px] tracking-[-0.005em] text-[#2a3c8f]">
            <svg class="mr-[4px] h-[7px] w-[11px]" viewBox="0 0 11 7" fill="none" stroke="#777" stroke-width="1.2"><path d="M.5.8l5 5 5-5" /></svg>
            ${title}<div class="ml-[7px] h-px flex-1 bg-[#e0e2e6]"></div>
          </div>
          ${rows
            .map(
              ([icon, name, date, type, size]) => `
            <div class="ml-[18px] flex h-[21px] w-[598px] items-center border pl-[3px] whitespace-nowrap text-[#6d6d6d] ${icon === "app" ? "border-[#8fcaf3] bg-[#cce8ff]" : "border-transparent"}">
              <svg class="mr-[4px] size-4 shrink-0"><use href="#${icon}" /></svg>
              <span class="w-[240px] text-black">${name}</span>
              <span class="w-[144px] tracking-[-0.04em]">${date}</span>
              <span class="w-[120px]">${type}</span>
              <span class="w-[66px] text-right tracking-[-0.045em]">${size}</span>
            </div>`
            )
            .join("")}`
        )
        .join("");
    </script>
  </body>
</html>
